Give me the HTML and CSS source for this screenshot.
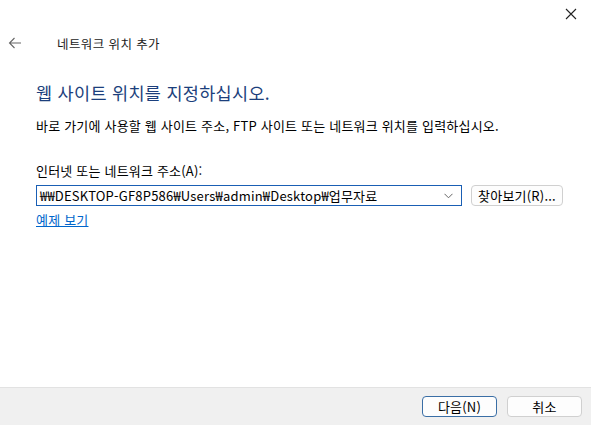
FILE: index.html
```html
<!DOCTYPE html>
<html lang="ko">
<head>
    <meta charset="UTF-8">
    <title>네트워크 위치 추가</title>
    <link rel="stylesheet" href="styles.css">
</head>
<body>
    <div class="dialog">
        <div class="titlebar">
            <span class="close">
                <svg width="12" height="12" viewBox="0 0 12 12"><path d="M1 1L11 11M11 1L1 11" stroke="#222" stroke-width="1.1"/></svg>
            </span>
        </div>

        <div class="nav">
            <span class="back">
                <svg width="14" height="12" viewBox="0 0 14 12"><path d="M13 6H1.5M6.5 1L1.5 6l5 5" stroke="#666" stroke-width="1.1" fill="none"/></svg>
            </span>
            <span class="nav-title">네트워크 위치 추가</span>
        </div>

        <div class="content">
            <h1>웹 사이트 위치를 지정하십시오.</h1>
            <p class="desc">바로 가기에 사용할 웹 사이트 주소, FTP 사이트 또는 네트워크 위치를 입력하십시오.</p>

            <label class="field-label">인터넷 또는 네트워크 주소(A):</label>
            <div class="field-row">
                <div class="combo">
                    <span class="combo-text">₩₩DESKTOP-GF8P586₩Users₩admin₩Desktop₩업무자료</span>
                    <svg class="chevron" width="9" height="6" viewBox="0 0 9 6"><path d="M0.5 0.8L4.5 4.8L8.5 0.8" stroke="#666" fill="none"/></svg>
                </div>
                <button class="btn browse">찾아보기(R)...</button>
            </div>
            <a class="link" href="#">예제 보기</a>
        </div>

        <div class="footer">
            <button class="btn primary">다음(N)</button>
            <button class="btn">취소</button>
        </div>
    </div>
</body>
</html>
```

FILE: styles.css
```css
html, body {
    margin: 0;
    padding: 0;
}

body {
    font-family: "Noto Sans CJK KR", "Noto Sans", sans-serif;
    font-size: 13px;
    letter-spacing: 0.2px;
    color: #000;
    background: #fff;
}

.dialog {
    width: 591px;
    height: 425px;
    display: flex;
    flex-direction: column;
}

.titlebar {
    height: 28px;
    display: flex;
    justify-content: flex-end;
}

.close {
    width: 40px;
    display: flex;
    align-items: center;
    justify-content: center;
    padding-left: 4px;
}

.nav {
    height: 30px;
    display: flex;
    align-items: center;
}

.back {
    width: 14px;
    margin-left: 8px;
    display: flex;
}

.nav-title {
    margin-left: 35px;
    font-size: 12.5px;
    letter-spacing: 0.4px;
    color: #1a1a1a;
}

.content {
    flex: 1;
    padding: 23px 0 0 36px;
}

h1 {
    margin: 0;
    font-size: 17.5px;
    letter-spacing: 0.3px;
    font-weight: normal;
    color: #1c3f7c;
    line-height: 24px;
}

.desc {
    margin: 12px 0 0;
    line-height: 18px;
}

.field-label {
    display: block;
    margin-top: 27px;
    line-height: 18px;
}

.field-row {
    display: flex;
    align-items: center;
    gap: 9px;
    margin-top: 5px;
}

.combo {
    height: 19px;
    border: 1px solid #1a5fb4;
    display: flex;
    align-items: center;
    justify-content: space-between;
    padding: 0 8px 0 3px;
    width: 413px;
}

.combo-text {
    line-height: 18px;
    white-space: nowrap;
}

.btn {
    font-family: inherit;
    font-size: 13px;
    letter-spacing: 0.2px;
    background: #fdfdfd;
    border: 1px solid #d0d0d0;
    border-radius: 4px;
    height: 21px;
    padding: 0;
    color: #000;
    line-height: 18px;
}

.browse {
    width: 92px;
}

.link {
    display: inline-block;
    margin-top: 5px;
    color: #0066cc;
    line-height: 18px;
}

.footer {
    height: 37px;
    background: #f0f0f0;
    border-top: 1px solid #e2e2e2;
    display: flex;
    align-items: center;
    justify-content: flex-end;
    gap: 10px;
    padding-right: 9px;
}

.footer .btn {
    width: 75px;
}

.primary {
    border: 1px solid #3a6ea5;
}
```
